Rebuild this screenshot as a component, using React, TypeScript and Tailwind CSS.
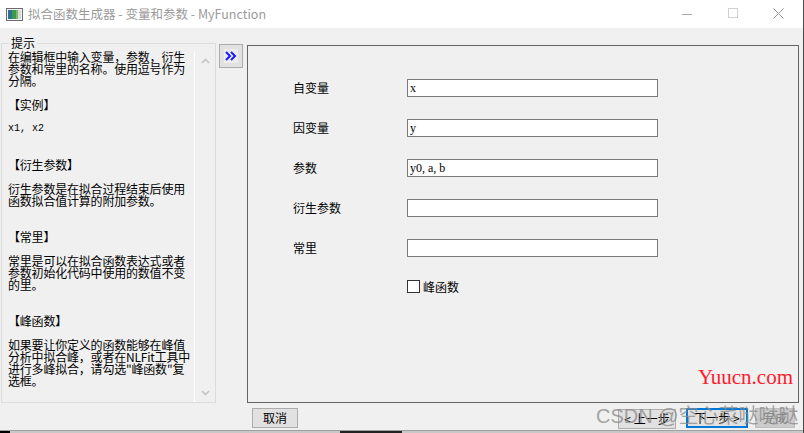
import React from "react";

const cjk = { fontFamily: '"Noto Sans CJK SC", "Noto Sans", sans-serif' };

const hintLines: string[] = [
  "在编辑框中输入变量，参数，衍生",
  "参数和常里的名称。使用逗号作为",
  "分隔。",
  "",
  "【实例】",
  "",
  "@@x1, x2",
  "",
  "",
  "【衍生参数】",
  "",
  "衍生参数是在拟合过程结束后使用",
  "函数拟合值计算的附加参数。",
  "",
  "",
  "【常里】",
  "",
  "常里是可以在拟合函数表达式或者",
  "参数初始化代码中使用的数值不变",
  "的里。",
  "",
  "",
  "【峰函数】",
  "",
  "如果要让你定义的函数能够在峰值",
  "分析中拟合峰，或者在NLFit工具中",
  "进行多峰拟合，请勾选\"峰函数\"复",
  "选框。",
];

function Field({ label, value }: { label: string; value: string }) {
  return (
    <div className="flex items-center h-[18px]">
      <div className="w-[114px] text-[12px] leading-[12px] text-black" style={cjk}>
        {label}
      </div>
      <div
        className="w-[251px] h-[18px] bg-white border border-[#7a7a7a] pl-[2px] flex items-center text-[12px] text-black"
        style={{ fontFamily: '"Liberation Serif", serif' }}
      >
        {value}
      </div>
    </div>
  );
}

export default function App() {
  return (
    <div className="w-[804px] h-[433px] bg-[#f0f0f0] flex flex-col overflow-hidden border-r border-[#4a4a4a] relative" style={cjk}>
      {/* Title bar */}
      <div className="h-[28px] bg-white flex items-center shrink-0">
        <svg width="17" height="13" viewBox="0 0 17 13" className="ml-[6px]">
          <rect x="0.5" y="0.5" width="16" height="12" fill="#f4f4f4" stroke="#6b6b6b" />
          <rect x="2" y="2" width="4" height="9" fill="#2f6f8f" />
          <rect x="6" y="2" width="4" height="9" fill="#3c9a4c" />
          <rect x="10" y="2" width="2" height="9" fill="#7cb86a" />
          <rect x="12" y="2" width="3" height="9" fill="#d8d8d8" />
        </svg>
        <div className="ml-[5px] text-[12.5px] text-[#9a9a9a]" style={{ fontFamily: '"Noto Sans CJK SC", "Noto Sans", sans-serif' }}>
          拟合函数生成器 - 变量和参数 - MyFunction
        </div>
        <div className="ml-auto flex items-center h-full">
          <div className="w-[46px] h-full flex items-center justify-center">
            <div className="w-[10px] h-px bg-[#a8a8a8]" />
          </div>
          <div className="w-[45px] h-full flex items-center justify-center">
            <div className="w-[10px] h-[10px] border border-[#d0d0d0] mb-[2px]" />
          </div>
          <div className="w-[46px] h-full flex items-center justify-center mr-[2px]">
            <svg width="11" height="11" viewBox="0 0 11 11" className="mb-[2px]">
              <path d="M0.5 0.5 L10.5 10.5 M10.5 0.5 L0.5 10.5" stroke="#9a9a9a" strokeWidth="1" />
            </svg>
          </div>
        </div>
      </div>

      {/* Main row */}
      <div className="flex items-start h-[374px] shrink-0">
        {/* Group box */}
        <div className="relative ml-[1px] mt-[15px] w-[215px] h-[360px] border border-[#dcdcdc] flex">
          <div className="absolute left-[7px] top-[-8px] px-[2px] bg-[#f0f0f0] text-[12px] leading-[14px] text-black">
            提示
          </div>
          <div className="w-[192px] pl-[6px] pt-[7px] text-[12px] text-black">
            {hintLines.map((l, i) =>
              l.startsWith("@@") ? (
                <div key={i} className="h-[12px] leading-[12px] whitespace-nowrap text-[10px]" style={{ fontFamily: '"Liberation Mono", monospace' }}>
                  {l.slice(2)}
                </div>
              ) : (
                <div key={i} className="h-[12px] leading-[12px] whitespace-nowrap tracking-[-0.2px]">
                  {l}
                </div>
              )
            )}
          </div>
          <div className="w-px bg-white mt-[8px]" />
          <div className="flex-1 flex flex-col items-center justify-between pt-[14px] pb-[6px]">
            <svg width="9" height="6" viewBox="0 0 9 6">
              <path d="M1 5 L4.5 1.5 L8 5" stroke="#c4c4c4" strokeWidth="1.6" fill="none" />
            </svg>
            <svg width="9" height="6" viewBox="0 0 9 6">
              <path d="M1 1 L4.5 4.5 L8 1" stroke="#c4c4c4" strokeWidth="1.6" fill="none" />
            </svg>
          </div>
        </div>

        {/* Expand button */}
        <div className="ml-[3px] mt-[16px] w-[24px] h-[24px] border border-[#adadad] bg-[#e1e1e1] flex items-center justify-center">
          <div className="w-[14px] h-[14px] bg-[#ececec] flex items-center justify-center">
            <svg width="12" height="10" viewBox="0 0 12 10">
              <path d="M1 1 L5 5 L1 9 M6 1 L10 5 L6 9" stroke="#1a1aff" strokeWidth="2" fill="none" />
            </svg>
          </div>
        </div>

        {/* Right panel */}
        <div className="relative ml-[4px] mt-[17px] w-[552px] h-[358px] border border-[#646464] pl-[45px] pt-[33px] flex flex-col gap-[22px]">
          <Field label="自变量" value="x" />
          <Field label="因变量" value="y" />
          <Field label="参数" value="y0, a, b" />
          <Field label="衍生参数" value="" />
          <Field label="常里" value="" />
          <div className="flex items-center ml-[114px] mt-[1px] h-[13px]">
            <div className="w-[13px] h-[13px] bg-white border border-[#333333]" />
            <div className="ml-[3px] text-[12px] leading-[12px] text-black">峰函数</div>
          </div>
          <div
            className="absolute right-[5px] bottom-[14px] text-[21px] leading-[21px] text-[#ff1a2e]"
            style={{ fontFamily: '"Liberation Serif", serif' }}
          >
            Yuucn.com
          </div>
        </div>
      </div>

      {/* Bottom buttons */}
      <div className="relative h-[28px] shrink-0 flex items-start pt-[6px]">
        <div className="ml-[252px] w-[46px] h-[20px] border border-[#adadad] bg-[#e1e1e1] flex items-center justify-center text-[12px] text-black">
          取消
        </div>
        <div className="ml-[320px] w-[58px] h-[20px] border border-[#adadad] bg-[#e1e1e1] flex items-center justify-center text-[12px] text-black mt-[1px]">
          &lt; 上一步
        </div>
        <div className="ml-[10px] w-[62px] h-[20px] border-2 border-[#0078d7] bg-[#e1e1e1] flex items-center justify-center text-[12px] text-black">
          下一步 &gt;
        </div>
        <div className="ml-[7px] w-[40px] h-[20px] border border-[#bfbfbf] bg-[#cccccc] flex items-center justify-center text-[12px] text-[#838383]">
          完成
        </div>
        <div
          className="absolute left-[596px] top-[1px] text-[20px] leading-[26px] text-[#8a8a8a] opacity-75 whitespace-nowrap"
          style={{ fontFamily: '"Liberation Sans", "Noto Sans CJK SC", sans-serif' }}
        >
          CSDN @空心菜哒哒哒
        </div>
      </div>

      {/* Bottom strip */}
      <div className="flex-1 bg-[#c8c8c8] border-t border-[#a0a0a0] flex">
        <div className="w-[10px] bg-black" />
        <div className="ml-[330px] w-[62px] bg-[#222222]" />
      </div>
    </div>
  );
}
